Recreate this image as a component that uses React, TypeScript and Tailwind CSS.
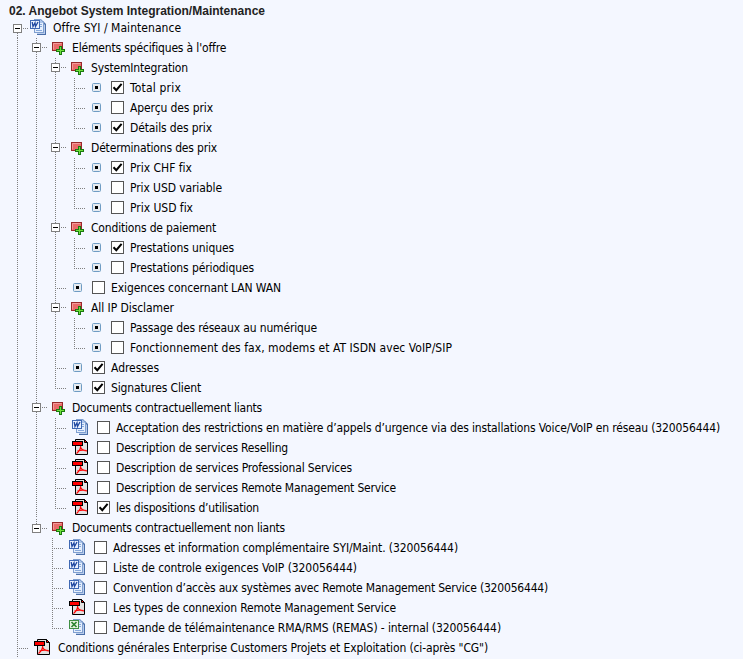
import { useLayoutEffect, useRef } from "react";

type Icon = "word" | "pdf" | "excel" | "group" | "bullet";
type Guide = "none" | "line" | "tee" | "end" | "toggle" | "toggleEnd" | "toggleFirst";
interface Row {
  guides: Guide[];
  icon: Icon;
  check?: boolean;
  text: string;
  width: number;
  shift?: boolean;
  last?: boolean;
}

const L: Guide = "line";
const T: Guide = "tee";
const E: Guide = "end";
const N: Guide = "none";
const G: Guide = "toggle";

const rows: Row[] = [
  { guides: ["toggleFirst"], icon: "word", text: "Offre SYI / Maintenance", width: 128 },
  { guides: [L, G], icon: "group", text: "Eléments spécifiques à l'offre", width: 154 },
  { guides: [L, L, G], icon: "group", text: "SystemIntegration", width: 97 },
  { guides: [L, L, L, T], icon: "bullet", check: true, text: "Total prix", width: 51 },
  { guides: [L, L, L, T], icon: "bullet", check: false, text: "Aperçu des prix", width: 83 },
  { guides: [L, L, L, E], icon: "bullet", check: true, text: "Détails des prix", width: 82 },
  { guides: [L, L, G], icon: "group", text: "Déterminations des prix", width: 126 },
  { guides: [L, L, L, T], icon: "bullet", check: true, text: "Prix CHF fix", width: 62 },
  { guides: [L, L, L, T], icon: "bullet", check: false, text: "Prix USD variable", width: 92 },
  { guides: [L, L, L, E], icon: "bullet", check: false, text: "Prix USD fix", width: 63 },
  { guides: [L, L, G], icon: "group", text: "Conditions de paiement", width: 125 },
  { guides: [L, L, L, T], icon: "bullet", check: true, text: "Prestations uniques", width: 104 },
  { guides: [L, L, L, E], icon: "bullet", check: false, text: "Prestations périodiques", width: 124 },
  { guides: [L, L, T], icon: "bullet", check: false, text: "Exigences concernant LAN WAN", width: 170 },
  { guides: [L, L, G], icon: "group", text: "All IP Disclamer", width: 83 },
  { guides: [L, L, L, T], icon: "bullet", check: false, text: "Passage des réseaux au numérique", width: 187 },
  { guides: [L, L, L, E], icon: "bullet", check: false, text: "Fonctionnement des fax, modems et AT ISDN avec VoIP/SIP", width: 322 },
  { guides: [L, L, T], icon: "bullet", check: true, text: "Adresses", width: 48 },
  { guides: [L, L, E], icon: "bullet", check: true, text: "Signatures Client", width: 90 },
  { guides: [L, G], icon: "group", text: "Documents contractuellement liants", width: 190 },
  { guides: [L, L, T], icon: "word", check: false, text: "Acceptation des restrictions en matière d’appels d’urgence via des installations Voice/VoIP en réseau (320056444)", width: 604 },
  { guides: [L, L, T], icon: "pdf", check: false, text: "Description de services Reselling", width: 172 },
  { guides: [L, L, T], icon: "pdf", check: false, text: "Description de services Professional Services", width: 236 },
  { guides: [L, L, T], icon: "pdf", check: false, text: "Description de services Remote Management Service", width: 280 },
  { guides: [L, L, E], icon: "pdf", check: true, text: "les dispositions d’utilisation", width: 143 },
  { guides: [L, "toggleEnd"], icon: "group", text: "Documents contractuellement non liants", width: 213 },
  { guides: [L, N, T], icon: "word", check: false, text: "Adresses et information complémentaire SYI/Maint. (320056444)", width: 345, shift: true },
  { guides: [L, N, T], icon: "word", check: false, text: "Liste de controle exigences VoIP (320056444)", width: 244, shift: true },
  { guides: [L, N, T], icon: "word", check: false, text: "Convention d’accès aux systèmes avec Remote Management Service (320056444)", width: 435, shift: true },
  { guides: [L, N, T], icon: "pdf", check: false, text: "Les types de connexion Remote Management Service", width: 283, shift: true },
  { guides: [L, N, E], icon: "excel", check: false, text: "Demande de télémaintenance RMA/RMS (REMAS) - internal (320056444)", width: 388, shift: true },
  { guides: [T], icon: "pdf", text: "Conditions générales Enterprise Customers Projets et Exploitation (ci-après \"CG\")", width: 430, last: true },
];

const vDots = "bg-[linear-gradient(#808080_50%,transparent_50%)] bg-[length:1px_2px]";
const hDots = "bg-[linear-gradient(90deg,#808080_50%,transparent_50%)] bg-[length:2px_1px]";

/* Spreads a label's letters so that it fills the given width. */
function Label({ text, width, className }: { text: string; width: number; className: string }) {
  const ref = useRef<HTMLSpanElement>(null);
  useLayoutEffect(() => {
    const el = ref.current;
    if (!el) return;
    el.style.letterSpacing = "0px";
    const natural = el.getBoundingClientRect().width;
    el.style.letterSpacing = `${(width - natural) / text.length}px`;
  }, [text, width]);
  return <span ref={ref} className={`whitespace-pre ${className}`}>{text}</span>;
}

function GuideCell({ kind }: { kind: Guide }) {
  if (kind === "none") return <div className="w-[19px] shrink-0" />;
  if (kind === "line")
    return (
      <div className="flex h-5 w-[19px] shrink-0 pl-1">
        <div className={`h-5 w-px ${vDots}`} />
      </div>
    );
  if (kind === "tee" || kind === "end")
    return (
      <div className="flex h-5 w-[19px] shrink-0 pl-1">
        <div className={`w-px ${kind === "tee" ? "h-5" : "h-[11px]"} ${vDots}`} />
        <div className={`mt-2.5 ml-px h-px w-2.5 ${hDots}`} />
      </div>
    );
  const pad = kind === "toggle" ? "" : "pt-px";
  return (
    <div className={`flex h-5 w-[19px] shrink-0 ${pad}`}>
      <div className="flex w-[9px] shrink-0 flex-col items-center">
        <div className={`h-[5px] w-px ${kind === "toggleFirst" ? "" : vDots}`} />
        <div className="flex h-[9px] w-[9px] shrink-0 items-center justify-center border border-[#808080] bg-white">
          <div className="h-px w-[5px] bg-black" />
        </div>
        {kind !== "toggleEnd" && <div className={`w-px grow ${vDots}`} />}
      </div>
      <div className={`mt-[9px] ml-px h-px w-[6px] ${hDots}`} />
    </div>
  );
}

function OfficeIcon({ excel = false }: { excel?: boolean }) {
  return (
    <svg width="16" height="16" viewBox="0 0 16 16" className="shrink-0">
      <path d="M7 2h6l3 3v11H7z" fill="#4a6ea8" />
      <path d="M7 3h5l3 3v9H7z" fill="#b9cdec" />
      <path d="M4 0h7l3 3v11H4z" fill="#7f9fd0" />
      <path d="M5 1h5l3 3v9H5z" fill="#e6effc" />
      <path d="M10 1v3h3z" fill="#a9c3ea" />
      <path d="M10 5.500h2M10 7.500h2M6 11.500h6" stroke="#86a9dc" />
      <rect x=".5" y="1.500" width="9" height="8" fill={excel ? "#e7f4e1" : "#eaf2ff"} stroke={excel ? "#3f8f43" : "#3f69b4"} />
      {excel ? (
        <path d="M2.500 3l5 5M7.500 3l-5 5" stroke="#2d8432" strokeWidth="1.700" />
      ) : (
        <path d="M2.200 3l.8 4.500L5 3.800l.5 3.700L8 3" fill="none" stroke="#1f48a0" strokeWidth="1.300" />
      )}
    </svg>
  );
}

function PdfIcon() {
  return (
    <svg width="16" height="16" viewBox="0 0 16 16" className="shrink-0">
      <path d="M3.500 .500h9l3 3v12h-12z" fill="#e2e2e2" stroke="#000" />
      <path d="M12.500 .500v3h3z" fill="#f00" stroke="#000" />
      <rect x="0" y="2" width="11" height="5" fill="#000" />
      <rect x="1" y="3" width="9" height="3" fill="#f00" />
      <path d="M8.500 7c.3 2.500-1.500 5.500-4 7.500M8.500 7c0 2.500 2.500 4.500 6.500 5M5.500 12c2.500-1 5.500-1.300 9-.5" fill="none" stroke="#f00" strokeWidth="1.200" />
    </svg>
  );
}

function GroupIcon() {
  return (
    <svg width="13" height="13" viewBox="0 0 13 13" className="shrink-0">
      <rect x=".5" y=".5" width="10" height="8" fill="#e96a6a" stroke="#97292b" />
      <path d="M1.500 7.500v-6h8" fill="none" stroke="#f39a9a" />
      <path d="M7 4h3v3h3v3h-3v3H7v-3H4V7h3z" fill="#1b7a10" />
      <path d="M8 5h1v3h3v1H9v3H8V9H5V8h3z" fill="#6fe03a" />
    </svg>
  );
}

function BulletIcon() {
  return (
    <svg width="9" height="9" viewBox="0 0 9 9" className="shrink-0">
      <rect x=".5" y=".5" width="8" height="8" rx="1" fill="#e6ebf0" stroke="#6f9cc4" />
      <rect x="3" y="3" width="3" height="3" fill="#000" />
    </svg>
  );
}

function CheckBox({ checked }: { checked: boolean }) {
  return (
    <div className="flex h-[13px] w-[13px] shrink-0 border border-[#555555] bg-white">
      {checked && (
        <svg width="11" height="11" viewBox="0 0 11 11">
          <path d="M1.500 5.200l2.800 3L9.600 1.800" fill="none" stroke="#000" strokeWidth="2" />
        </svg>
      )}
    </div>
  );
}

function TreeRow({ row }: { row: Row }) {
  let iconBox = "w-[27px] pl-0.5 pt-px";
  if (row.icon === "group") iconBox = "w-[21px] pl-px pt-1";
  else if (row.icon === "bullet") iconBox = "w-[22px] pl-[3px] pt-[5px]";
  else if (row.last) iconBox = "w-[26px] pl-0.5 pt-px";
  else if (row.check === undefined) iconBox = "-ml-0.5 w-[23px] pt-px";
  return (
    <div className="flex h-5 pl-[13px]">
      {row.guides.map((g, i) => (
        <div key={i} className={row.shift && i === 2 ? "-ml-[3px]" : ""}>
          <GuideCell kind={g} />
        </div>
      ))}
      <div className={`flex shrink-0 items-start ${iconBox}`}>
        {row.icon === "word" && <OfficeIcon />}
        {row.icon === "excel" && <OfficeIcon excel />}
        {row.icon === "pdf" && <PdfIcon />}
        {row.icon === "group" && <GroupIcon />}
        {row.icon === "bullet" && <BulletIcon />}
      </div>
      {row.check !== undefined && (
        <div className="w-[19px] shrink-0 pt-[3px]">
          <CheckBox checked={row.check} />
        </div>
      )}
      <Label text={row.text} width={row.width} className="leading-5" />
    </div>
  );
}

export default function App() {
  return (
    <main className="h-[659px] w-[743px] overflow-hidden bg-[#f4f7ff] font-['Tahoma','DejaVu_Sans_Condensed','DejaVu_Sans',sans-serif] text-[12px] text-black">
      <h1 className="flex h-[18px] items-center pt-[3px] pl-[9px] font-['Liberation_Sans',Arial,sans-serif] text-[12px] font-bold text-[#222222]">
        <Label text="02. Angebot System Integration/Maintenance" width={256} className="leading-[18px]" />
      </h1>
      {rows.map((row) => (
        <TreeRow key={row.text} row={row} />
      ))}
    </main>
  );
}
